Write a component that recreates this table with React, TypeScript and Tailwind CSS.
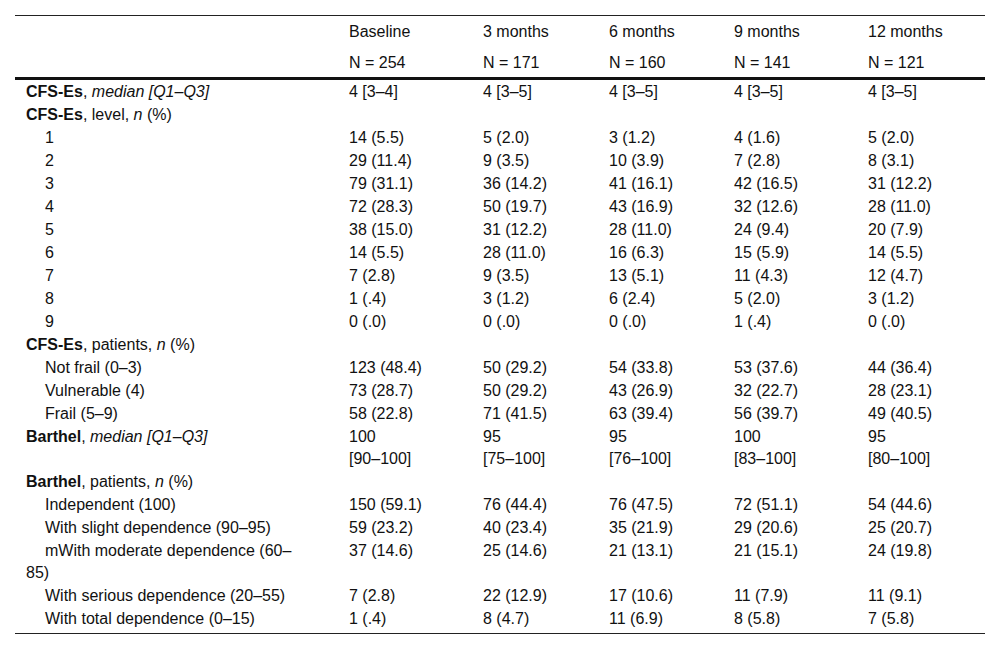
import React from 'react'

type Row = {
  label: React.ReactNode
  cells?: React.ReactNode[]
  sub?: boolean
}

const cols = ['Baseline', '3 months', '6 months', '9 months', '12 months']
const totals = ['N = 254', 'N = 171', 'N = 160', 'N = 141', 'N = 121']

const rows: Row[] = [
  {
    label: (
      <>
        <b>CFS-Es</b>, <i>median [Q1–Q3]</i>
      </>
    ),
    cells: ['4 [3–4]', '4 [3–5]', '4 [3–5]', '4 [3–5]', '4 [3–5]'],
  },
  {
    label: (
      <>
        <b>CFS-Es</b>, level, <i>n</i> (%)
      </>
    ),
  },
  { label: '1', sub: true, cells: ['14 (5.5)', '5 (2.0)', '3 (1.2)', '4 (1.6)', '5 (2.0)'] },
  { label: '2', sub: true, cells: ['29 (11.4)', '9 (3.5)', '10 (3.9)', '7 (2.8)', '8 (3.1)'] },
  { label: '3', sub: true, cells: ['79 (31.1)', '36 (14.2)', '41 (16.1)', '42 (16.5)', '31 (12.2)'] },
  { label: '4', sub: true, cells: ['72 (28.3)', '50 (19.7)', '43 (16.9)', '32 (12.6)', '28 (11.0)'] },
  { label: '5', sub: true, cells: ['38 (15.0)', '31 (12.2)', '28 (11.0)', '24 (9.4)', '20 (7.9)'] },
  { label: '6', sub: true, cells: ['14 (5.5)', '28 (11.0)', '16 (6.3)', '15 (5.9)', '14 (5.5)'] },
  { label: '7', sub: true, cells: ['7 (2.8)', '9 (3.5)', '13 (5.1)', '11 (4.3)', '12 (4.7)'] },
  { label: '8', sub: true, cells: ['1 (.4)', '3 (1.2)', '6 (2.4)', '5 (2.0)', '3 (1.2)'] },
  { label: '9', sub: true, cells: ['0 (.0)', '0 (.0)', '0 (.0)', '1 (.4)', '0 (.0)'] },
  {
    label: (
      <>
        <b>CFS-Es</b>, patients, <i>n</i> (%)
      </>
    ),
  },
  { label: 'Not frail (0–3)', sub: true, cells: ['123 (48.4)', '50 (29.2)', '54 (33.8)', '53 (37.6)', '44 (36.4)'] },
  { label: 'Vulnerable (4)', sub: true, cells: ['73 (28.7)', '50 (29.2)', '43 (26.9)', '32 (22.7)', '28 (23.1)'] },
  { label: 'Frail (5–9)', sub: true, cells: ['58 (22.8)', '71 (41.5)', '63 (39.4)', '56 (39.7)', '49 (40.5)'] },
  {
    label: (
      <>
        <b>Barthel</b>, <i>median [Q1–Q3]</i>
      </>
    ),
    cells: [
      <>100<br />[90–100]</>,
      <>95<br />[75–100]</>,
      <>95<br />[76–100]</>,
      <>100<br />[83–100]</>,
      <>95<br />[80–100]</>,
    ],
  },
  {
    label: (
      <>
        <b>Barthel</b>, patients, <i>n</i> (%)
      </>
    ),
  },
  { label: 'Independent (100)', sub: true, cells: ['150 (59.1)', '76 (44.4)', '76 (47.5)', '72 (51.1)', '54 (44.6)'] },
  { label: 'With slight dependence (90–95)', sub: true, cells: ['59 (23.2)', '40 (23.4)', '35 (21.9)', '29 (20.6)', '25 (20.7)'] },
  {
    label: (
      <>
        mWith moderate dependence (60–
        <br />
        85)
      </>
    ),
    sub: true,
    cells: ['37 (14.6)', '25 (14.6)', '21 (13.1)', '21 (15.1)', '24 (19.8)'],
  },
  { label: 'With serious dependence (20–55)', sub: true, cells: ['7 (2.8)', '22 (12.9)', '17 (10.6)', '11 (7.9)', '11 (9.1)'] },
  { label: 'With total dependence (0–15)', sub: true, cells: ['1 (.4)', '8 (4.7)', '11 (6.9)', '8 (5.8)', '7 (5.8)'] },
]

const grid = 'grid grid-cols-[324px_134px_126px_125px_134px_127px]'

export default function App() {
  return (
    <div className="min-h-screen bg-white px-[15px] pt-[15px] text-[16px] leading-[22px] text-[#111] font-['Liberation_Sans',Arial,sans-serif]">
      <div className="border-t border-b border-[#222] pb-[3px]">
        {/* Header */}
        <div className={`${grid} border-b-[3px] border-[#111]`}>
          <div />
          {cols.map((c) => (
            <div key={c} className="pl-[10px] pt-[5px] pb-[3px]">
              {c}
            </div>
          ))}
          <div />
          {totals.map((t) => (
            <div key={t} className="pl-[10px] pt-[6px] pb-[3px]">
              {t}
            </div>
          ))}
        </div>

        {/* Body */}
        <div className={grid}>
          {rows.map((row, i) => (
            <React.Fragment key={i}>
              <div className={`pl-[11px] pt-[1px] ${row.sub ? 'indent-[19px]' : ''}`}>{row.label}</div>
              {[0, 1, 2, 3, 4].map((j) => (
                <div key={j} className="pl-[10px] pt-[1px]">
                  {row.cells ? row.cells[j] : null}
                </div>
              ))}
            </React.Fragment>
          ))}
        </div>
      </div>
    </div>
  )
}
